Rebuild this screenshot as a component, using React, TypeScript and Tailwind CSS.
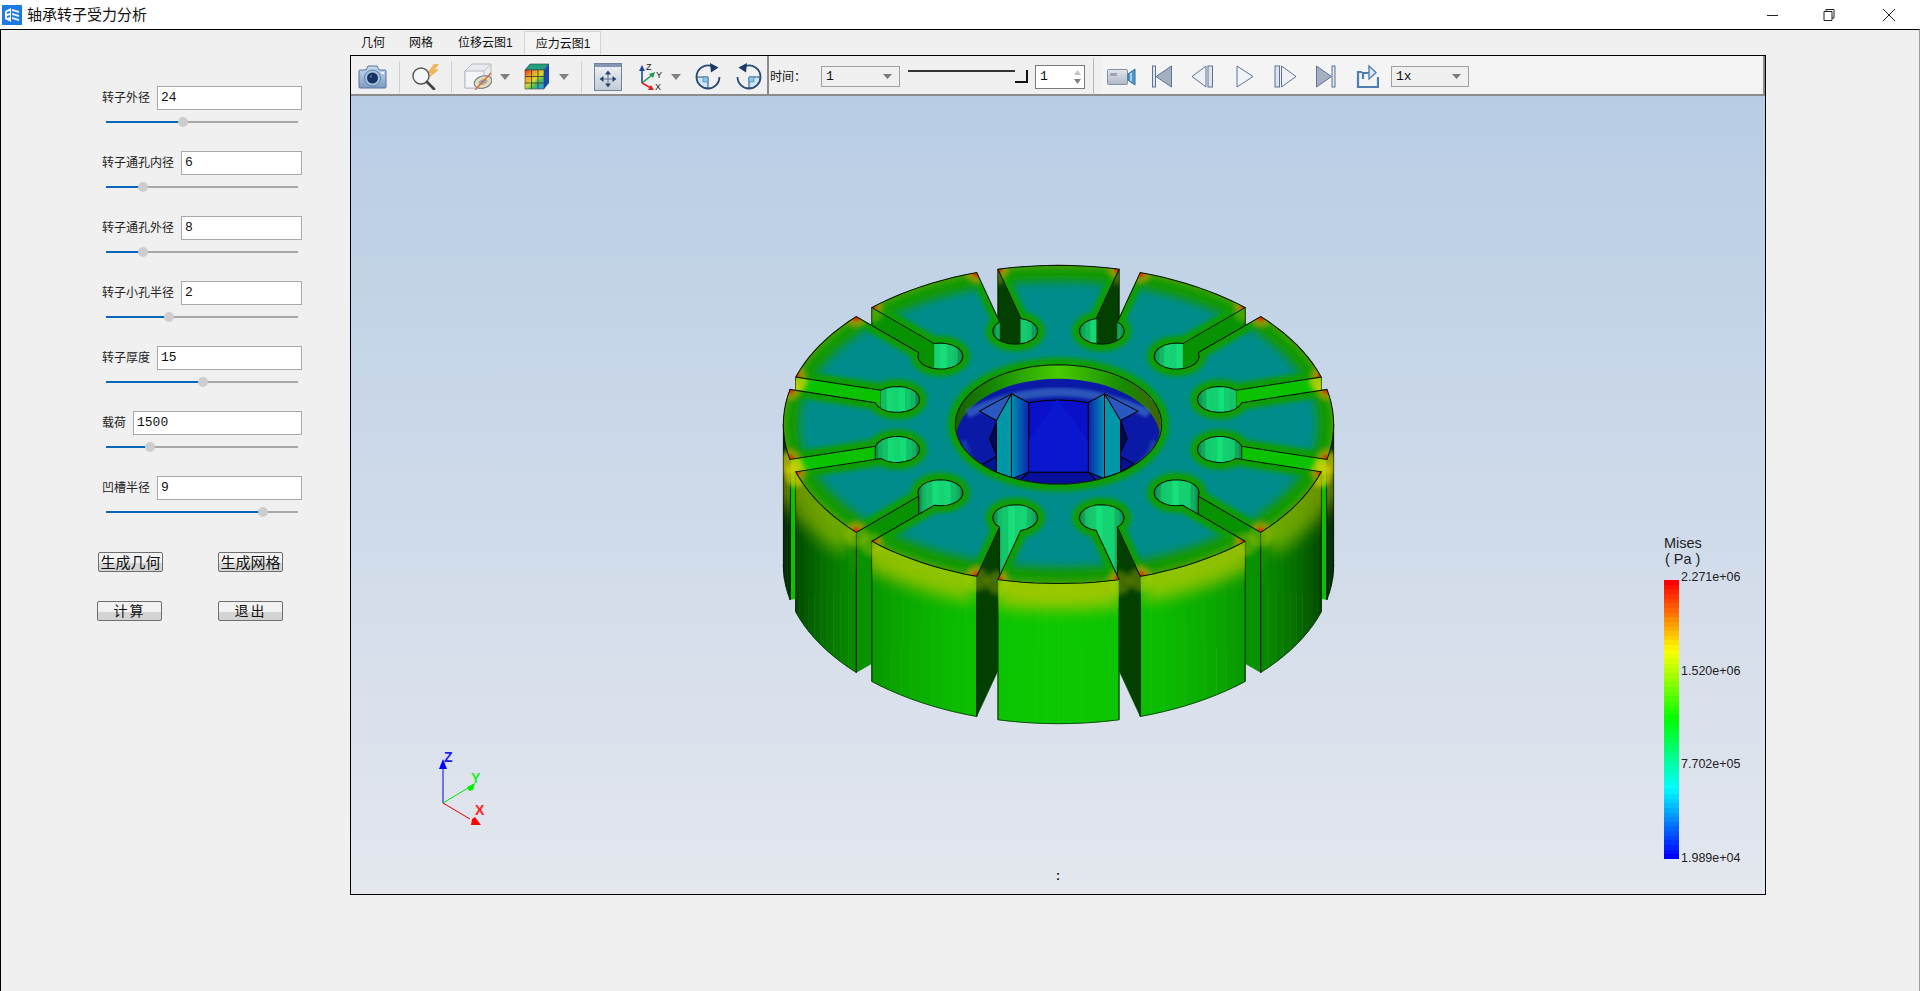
import React from "react";

const CJK = "font-['Liberation_Sans','Noto_Sans_CJK_SC',sans-serif]";

const params = [
  { label: "转子外径", value: "24", pos: 77 },
  { label: "转子通孔内径", value: "6", pos: 37 },
  { label: "转子通孔外径", value: "8", pos: 37 },
  { label: "转子小孔半径", value: "2", pos: 63 },
  { label: "转子厚度", value: "15", pos: 97 },
  { label: "载荷", value: "1500", pos: 44 },
  { label: "凹槽半径", value: "9", pos: 157 },
];

// ---- rotor geometry ----
const CX = 1058;
const CY = 424;
const RX = 275;
const RY = 159;
const H = 140;
const SLOT_W = 0.04;
const HOLE_C = 0.607;
const HOLE_R = 0.082;
const BORE_R = 0.375;

type P = [number, number];
type Run = { kind: "outer" | "slot" | "hole"; pts: P[] };

const sx = (p: P): P => [CX + p[0] * RX, CY + p[1] * RY];
const d2r = (d: number) => (d * Math.PI) / 180;

function buildRuns() {
  const runs: Run[] = [];
  const corners: P[] = [];
  const delta = Math.asin(SLOT_W);
  const phi0 = Math.asin(SLOT_W / HOLE_R);
  const uOut = Math.sqrt(1 - SLOT_W * SLOT_W);
  const uNeck = HOLE_C + HOLE_R * Math.cos(phi0);
  for (let k = 0; k < 12; k++) {
    const t = d2r(15 + 30 * k);
    const d: P = [Math.sin(t), -Math.cos(t)];
    const q: P = [Math.cos(t), Math.sin(t)];
    const at = (u: number, v: number): P => [d[0] * u + q[0] * v, d[1] * u + q[1] * v];
    runs.push({ kind: "slot", pts: [at(uOut, -SLOT_W), at(uNeck, -SLOT_W)] });
    const hole: P[] = [];
    const n = 18;
    for (let i = 0; i <= n; i++) {
      const f = -phi0 - ((2 * Math.PI - 2 * phi0) * i) / n;
      hole.push(at(HOLE_C + HOLE_R * Math.cos(f), HOLE_R * Math.sin(f)));
    }
    runs.push({ kind: "hole", pts: hole });
    runs.push({ kind: "slot", pts: [at(uNeck, SLOT_W), at(uOut, SLOT_W)] });
    const arc: P[] = [];
    const m = 10;
    for (let i = 0; i <= m; i++) {
      const a = t + delta + ((d2r(30) - 2 * delta) * i) / m;
      arc.push([Math.sin(a), -Math.cos(a)]);
    }
    runs.push({ kind: "outer", pts: arc });
    corners.push(at(uOut, -SLOT_W), at(uOut, SLOT_W));
  }
  return { runs, corners };
}

const { runs, corners } = buildRuns();

const toD = (pts: P[]) =>
  pts
    .map((p, i) => {
      const s = sx(p);
      return `${i ? "L" : "M"}${s[0].toFixed(1)} ${s[1].toFixed(1)}`;
    })
    .join(" ");

const outline = runs.flatMap((r) => r.pts);
const bore: P[] = Array.from({ length: 73 }, (_, i) => [
  BORE_R * Math.cos(d2r(i * 5)),
  BORE_R * Math.sin(d2r(i * 5)),
]);
const faceD = `${toD(outline)} Z ${toD(bore)} Z`;
const outerRuns = runs.filter((r) => r.kind === "outer");
const arcsD = outerRuns.map((r) => toD(r.pts)).join(" ");

type Wall = { y: number; d: string; fill: string; kind: string; bottom?: string; ends: string[] };
const walls: Wall[] = [];
runs.forEach((r) => {
  for (let i = 0; i < r.pts.length - 1; i++) {
    const a = r.pts[i];
    const b = r.pts[i + 1];
    const dx = b[0] - a[0];
    const dy = b[1] - a[1];
    const len = Math.hypot(dx, dy);
    const ny = -dx / len;
    if (ny <= 0.02) continue;
    const A = sx(a);
    const B = sx(b);
    let fill: string;
    if (r.kind === "hole") {
      const v = (i % 2 ? 0.9 : 1) * ny;
      fill = `rgb(${Math.round(8 + 14 * v)},${Math.round(95 + 130 * v)},${Math.round(55 + 65 * v)})`;
    } else {
      fill = `rgb(${Math.round(12 * ny)},${Math.round(16 + 184 * ny)},0)`;
    }
    const ends: string[] = [];
    if (r.kind !== "hole" && i === 0) ends.push(`M${A[0]} ${A[1]} V${A[1] + H}`);
    if (r.kind !== "hole" && i === r.pts.length - 2) ends.push(`M${B[0]} ${B[1]} V${B[1] + H}`);
    walls.push({
      y: (A[1] + B[1]) / 2 + (r.kind === "outer" ? 1000 : 0),
      d: `M${A[0]} ${A[1]} L${B[0]} ${B[1]} L${B[0]} ${B[1] + H} L${A[0]} ${A[1] + H} Z`,
      fill,
      kind: r.kind,
      bottom: r.kind === "outer" ? `M${A[0]} ${A[1] + H} L${B[0]} ${B[1] + H}` : undefined,
      ends,
    });
  }
});
walls.sort((a, b) => a.y - b.y);
const outerWallsD = walls.filter((w) => w.kind === "outer").map((w) => w.d).join(" ");
const sideWallsD = walls.filter((w) => w.kind !== "hole").map((w) => w.d).join(" ");

function Rotor() {
  return (
    <svg className="absolute left-0 top-0 h-full w-full" viewBox="351 96 1413 797">
      <defs>
        <filter id="blurL" x="-20%" y="-20%" width="140%" height="140%"><feGaussianBlur stdDeviation="5" /></filter>
        <filter id="blurS" x="-20%" y="-20%" width="140%" height="140%"><feGaussianBlur stdDeviation="2.4" /></filter>
        <filter id="blurXS" x="-100%" y="-100%" width="300%" height="300%"><feGaussianBlur stdDeviation="1.6" /></filter>
        <filter id="blurW" filterUnits="userSpaceOnUse" x="600" y="300" width="920" height="400"><feGaussianBlur stdDeviation="8" /></filter>
        <linearGradient id="bandG" x1="0" y1="0" x2="1" y2="0">
          <stop offset="0" stopColor="#1a5a00" />
          <stop offset="0.2" stopColor="#168a00" />
          <stop offset="0.5" stopColor="#48cc00" />
          <stop offset="0.8" stopColor="#168a00" />
          <stop offset="1" stopColor="#4a5a00" />
        </linearGradient>
        <linearGradient id="colL" x1="0" y1="0" x2="1" y2="0">
          <stop offset="0" stopColor="#0090b0" />
          <stop offset="1" stopColor="#0824b0" />
        </linearGradient>
        <linearGradient id="colR" x1="0" y1="0" x2="1" y2="0">
          <stop offset="0" stopColor="#0824b0" />
          <stop offset="1" stopColor="#0090b0" />
        </linearGradient>
        <clipPath id="faceClip"><path d={faceD} clipRule="evenodd" /></clipPath>
        <clipPath id="boreClip"><ellipse cx="473" cy="252" rx="308" ry="179" /></clipPath>
        <clipPath id="outerClip"><path d={outerWallsD} /></clipPath>
        <clipPath id="sideClip"><path d={sideWallsD} /></clipPath>
      </defs>

      {walls.map((w, i) => (
        <g key={i}>
          <path d={w.d} fill={w.fill} stroke={w.fill} strokeWidth="0.6" />
          {w.bottom && <path d={w.bottom} stroke="#063006" strokeWidth="0.8" fill="none" />}
          {w.ends.map((e, j) => (
            <path key={j} d={e} stroke="#021a02" strokeWidth="1" fill="none" />
          ))}
        </g>
      ))}

      {/* yellow fringe along the top of the outer wall, fainter on the turned-away sectors */}
      <g clipPath="url(#outerClip)">
        {outerRuns.map((r, i) => {
          const mid = r.pts[5];
          if (mid[1] <= 0) return null;
          return <path key={i} d={toD(r.pts)} fill="none" stroke="#b4c800" strokeWidth="52" filter="url(#blurW)" opacity={0.3 + 0.55 * mid[1]} />;
        })}
      </g>
      <g clipPath="url(#sideClip)">
        {corners.map((p, i) => {
          const s = sx(p);
          return <circle key={i} cx={s[0]} cy={s[1] + 3} r="12" fill="#d8d000" filter="url(#blurS)" opacity={Math.abs(p[1]) < 0.45 ? 0.7 : 0.3} />;
        })}
      </g>

      {/* centre bore, traced at 3x around (900,340) */}
      <g transform="translate(900 340) scale(0.33333)">
        <g clipPath="url(#boreClip)">
          <rect x="150" y="60" width="650" height="390" fill="url(#bandG)" />
          <ellipse cx="473" cy="296" rx="306" ry="181" fill="#0a1aa6" />
          <path d="M200 220 Q473 90 745 220" fill="none" stroke="#3a70c4" strokeWidth="26" filter="url(#blurL)" opacity="0.7" />
          <path d="M190 300 Q200 370 250 390 M760 300 Q750 350 710 380" fill="none" stroke="#2c5cc0" strokeWidth="18" filter="url(#blurL)" opacity="0.5" />
          <path d="M268 295 L288 245 V345 Z" fill="#000a58" stroke="#000" strokeWidth="3" />
          <path d="M680 295 L660 240 V335 Z" fill="#000a58" stroke="#000" strokeWidth="3" />
          <path d="M288 348 L245 372 L288 400 Z" fill="#001296" stroke="#000" strokeWidth="3" />
          <path d="M660 348 L700 370 L660 395 Z" fill="#001296" stroke="#000" strokeWidth="3" />
          <path d="M237 212 L333 160 L333 250 L288 240 Z" fill="#2a58c0" stroke="#000" strokeWidth="3" />
          <path d="M712 212 L612 160 L612 250 L660 240 Z" fill="#2a58c0" stroke="#000" strokeWidth="3" />
          <path d="M288 240 L333 160 V412 L288 395 Z" fill="#0098a8" stroke="#000" strokeWidth="3" />
          <path d="M333 160 L385 187 V395 L333 415 Z" fill="url(#colL)" stroke="#000" strokeWidth="3" />
          <path d="M612 160 L563 187 V395 L612 415 Z" fill="url(#colR)" stroke="#000" strokeWidth="3" />
          <path d="M660 240 L612 160 V412 L660 395 Z" fill="#0098a8" stroke="#000" strokeWidth="3" />
          <path d="M385 187 Q473 170 563 187 V395 H385 Z" fill="#0a10c8" stroke="#000" strokeWidth="3" />
          <path d="M470 176 L385 300 V395 H563 V300 Z" fill="#0a1cd4" opacity="0.6" />
          <path d="M385 395 L360 418 L420 440 H520 L585 418 L563 395 Z" fill="#06109a" stroke="#000" strokeWidth="3" />
        </g>
      </g>

      {/* top face with the stress fringes */}
      <g clipPath="url(#faceClip)">
        <rect x="700" y="240" width="720" height="370" fill="#008c8c" />
        <path d={arcsD} fill="none" stroke="#149800" strokeWidth="32" filter="url(#blurL)" />
        <path d={faceD} fill="none" stroke="#0f9e00" strokeWidth="14" filter="url(#blurS)" />
        <path d={arcsD} fill="none" stroke="#5c9a00" strokeWidth="6" filter="url(#blurS)" opacity="0.8" />
        {corners.map((p, i) => {
          const s = sx(p);
          return (
            <g key={i}>
              <circle cx={s[0]} cy={s[1]} r="11" fill="#a09a00" filter="url(#blurS)" opacity="0.85" />
              <circle cx={s[0]} cy={s[1]} r="4.5" fill="#e03000" filter="url(#blurXS)" />
            </g>
          );
        })}
      </g>
      <path d={faceD} fill="none" stroke="#031603" strokeWidth="1" />
    </svg>
  );
}

function Legend() {
  const bands = Array.from({ length: 60 }, (_, i) => {
    const f = i / 59;
    const hue = f < 0.5 ? f * 2 * 120 : 120 + (f - 0.5) * 2 * 120;
    return `hsl(${hue.toFixed(0)},100%,50%)`;
  });
  const labels = [
    { t: "2.271e+06", cls: "top-[474px]" },
    { t: "1.520e+06", cls: "top-[568px]" },
    { t: "7.702e+05", cls: "top-[661px]" },
    { t: "1.989e+04", cls: "top-[755px]" },
  ];
  return (
    <>
      <div className="absolute left-[1313px] top-[439px] text-[14.5px] leading-[16px] text-[#222] font-['Liberation_Sans',sans-serif]">
        Mises
        <br />
        <span className="ml-[1px]">( Pa )</span>
      </div>
      <svg className="absolute left-[1313px] top-[484px]" width="15" height="279" viewBox="0 0 15 279" shapeRendering="crispEdges">
        {bands.map((c, i) => (
          <rect key={i} x="0" y={i * 4.65} width="15" height="5" fill={c} />
        ))}
      </svg>
      {labels.map((l) => (
        <div key={l.t} className={`absolute left-[1330px] text-[12.5px] leading-[14px] text-[#222] font-['Liberation_Sans',sans-serif] ${l.cls}`}>
          {l.t}
        </div>
      ))}
    </>
  );
}

function Triad() {
  return (
    <svg className="absolute left-[59px] top-[644px]" width="100" height="100" viewBox="0 0 100 100">
      <path d="M33 63 L33 28" stroke="#0000ff" strokeWidth="1" />
      <path d="M33 19 L37 29 L29 29 Z" fill="#0000ff" />
      <path d="M33 63 L58 48" stroke="#00e000" strokeWidth="1" />
      <path d="M65 43 L63 50 L59 51 L57 47 Z" fill="#00ee00" />
      <path d="M33 63 L60 79" stroke="#e00000" strokeWidth="1" />
      <path d="M71 85 L61 85 L62 79 L65 77 Z" fill="#ff0000" />
      <text x="34" y="22" fontSize="14" fontWeight="700" fill="#1a1aff" fontFamily="Liberation Sans, sans-serif">Z</text>
      <text x="61" y="43" fontSize="14" fontWeight="700" fill="#22ee22" fontFamily="Liberation Sans, sans-serif">Y</text>
      <text x="65" y="75" fontSize="14" fontWeight="700" fill="#ff2020" fontFamily="Liberation Sans, sans-serif">X</text>
    </svg>
  );
}

// ---- toolbar icons ----
function CameraIcon() {
  return (
    <svg width="29" height="26" viewBox="0 0 29 26">
      <defs>
        <linearGradient id="camG" x1="0" y1="0" x2="0" y2="1">
          <stop offset="0" stopColor="#c9dcee" />
          <stop offset="1" stopColor="#7d9cc2" />
        </linearGradient>
      </defs>
      <path d="M2 6 H8 L10 2 H19 L21 6 H27 Q28 6 28 7 V23 Q28 24 27 24 H2 Q1 24 1 23 V7 Q1 6 2 6 Z" fill="url(#camG)" stroke="#56749c" />
      <circle cx="14.5" cy="14" r="8" fill="#a9c4de" stroke="#5d7da6" />
      <circle cx="14.5" cy="14" r="5.5" fill="#173264" />
      <circle cx="13" cy="12.5" r="1.2" fill="#4c6ea4" />
      <rect x="23" y="8" width="3" height="2" fill="#eef4fa" />
    </svg>
  );
}
function MagnifierIcon() {
  return (
    <svg width="29" height="27" viewBox="0 0 29 27">
      <path d="M23 1 L16 10 H20 L18 15 L28 6.5 H24 L28 1 Z" fill="#f2b45a" />
      <circle cx="10" cy="13" r="8" fill="#f6f7f9" stroke="#555" strokeWidth="1.4" />
      <path d="M16 19 L23 26" stroke="#444" strokeWidth="2.8" strokeLinecap="round" />
    </svg>
  );
}
function ClipCubeIcon() {
  return (
    <svg width="28" height="27" viewBox="0 0 28 27">
      <path d="M1 8 L8 1 H27 V17 L20 25 H1 Z" fill="#e9ebee" stroke="#b4bac2" />
      <path d="M20 8 L27 1" fill="none" stroke="#bcc2ca" />
      <path d="M1 8 H20 V25 H1 Z" fill="#f5f6f7" stroke="#b4bac2" />
      <ellipse cx="19" cy="19" rx="9" ry="6" fill="#e8dcae" stroke="#66788f" transform="rotate(-18 19 19)" />
      <ellipse cx="19" cy="19" rx="4.5" ry="2.6" fill="#9aa8ba" transform="rotate(-18 19 19)" />
      <path d="M11 27 L27 10" stroke="#d8603c" strokeWidth="1.2" />
    </svg>
  );
}
function FringeCubeIcon() {
  return (
    <svg width="26" height="27" viewBox="0 0 26 27">
      <defs>
        <linearGradient id="frG" x1="0" y1="0" x2="0.8" y2="1">
          <stop offset="0" stopColor="#e82818" />
          <stop offset="0.3" stopColor="#f0a020" />
          <stop offset="0.55" stopColor="#d8d830" />
          <stop offset="0.75" stopColor="#40c060" />
          <stop offset="1" stopColor="#28a0e0" />
        </linearGradient>
      </defs>
      <path d="M6 1 H25 L20 7 H1 Z" fill="#20a080" stroke="#333" strokeWidth="0.6" />
      <path d="M20 7 L25 1 V20 L20 26 Z" fill="#1848b0" />
      <rect x="1" y="7" width="19" height="19" fill="url(#frG)" />
      <path d="M7.5 7 V26 M14 7 V26 M1 13.5 H20 M1 20 H20" stroke="#333" strokeWidth="0.8" />
      <path d="M1 7 H20 V26 H1 Z" fill="none" stroke="#444" strokeWidth="0.6" />
    </svg>
  );
}
function FitIcon() {
  return (
    <svg width="28" height="28" viewBox="0 0 28 28">
      <defs>
        <linearGradient id="fitG" x1="0" y1="0" x2="0" y2="1">
          <stop offset="0" stopColor="#f0f2f5" />
          <stop offset="1" stopColor="#c4ccd8" />
        </linearGradient>
      </defs>
      <rect x="0.5" y="0.5" width="27" height="27" fill="url(#fitG)" stroke="#6f829e" />
      <rect x="1" y="1" width="26" height="3" fill="#8496b2" />
      <path d="M14 11 V21 M9 16 H19" stroke="#5a7090" strokeWidth="1" />
      <path d="M14 7.5 L17 11.5 H11 Z M14 24.5 L17 20.5 H11 Z M5.5 16 L9.5 13 V19 Z M22.5 16 L18.5 13 V19 Z" fill="#26456f" />
    </svg>
  );
}
function AxesIcon() {
  return (
    <svg width="26" height="28" viewBox="0 0 26 28">
      <path d="M4 20 V6" stroke="#1a4aa8" strokeWidth="1.6" />
      <path d="M4 2 L7 8 H1 Z" fill="#1a4aa8" />
      <path d="M4 20 L14 12" stroke="#1a9a50" strokeWidth="1.6" />
      <path d="M17 9 L15 15 L11 11 Z" fill="#1a9a50" />
      <path d="M4 20 L13 25" stroke="#e02020" strokeWidth="1.6" />
      <path d="M16 27 L10 27 L13 22 Z" fill="#e02020" />
      <text x="8" y="7" fontSize="9" fill="#222" fontFamily="Liberation Sans, sans-serif">Z</text>
      <text x="18" y="15" fontSize="9" fill="#222" fontFamily="Liberation Sans, sans-serif">Y</text>
      <text x="17" y="27" fontSize="9" fill="#222" fontFamily="Liberation Sans, sans-serif">X</text>
    </svg>
  );
}
function RotateIcon({ flip }: { flip?: boolean }) {
  return (
    <svg width="28" height="27" viewBox="0 0 28 27" className={flip ? "-scale-x-100" : ""}>
      <path d="M14 14 H2.5 A11.5 11.5 0 0 0 14 25.5 Z" fill="#cfe6f8" stroke="#2a4a78" strokeWidth="1" />
      <path d="M9 14 H14 V19 H9 Z" fill="#8cc4ec" stroke="#3a7ab0" strokeWidth="0.6" />
      <path d="M18 3.2 A11.5 11.5 0 0 0 2.5 14 A11.5 11.5 0 0 0 25.5 14" fill="none" stroke="#2a4a78" strokeWidth="1.8" />
      <path d="M16 0 L24.5 4.5 L17 9.5 Z" fill="#1c3a68" />
    </svg>
  );
}
function CamcorderIcon() {
  return (
    <svg width="29" height="20" viewBox="0 0 29 20">
      <defs>
        <linearGradient id="ccG" x1="0" y1="0" x2="0" y2="1">
          <stop offset="0" stopColor="#e4e8ee" />
          <stop offset="1" stopColor="#aeb8c6" />
        </linearGradient>
      </defs>
      <rect x="0.5" y="2.5" width="20" height="15" rx="1.5" fill="url(#ccG)" stroke="#8090a6" />
      <rect x="3" y="6" width="7" height="3" fill="#9aa4b2" />
      <path d="M21 7 L28 2 V18 L21 13 Z" fill="#4f9ad0" stroke="#2f6a9c" />
      <path d="M24 6 V14" stroke="#cfe6f6" strokeWidth="1.4" />
    </svg>
  );
}

function PlayIcon({ kind, w }: { kind: string; w: number }) {
  return (
    <svg width={w} height="24" viewBox={`0 0 ${w} 24`}>
      {kind === "first" && (
        <>
          <rect x="0.5" y="1" width="3" height="21" fill="#dfe4ea" stroke="#5d7496" />
          <path d="M19.5 1 V22 L4 11.5 Z" fill="#a4b0c0" stroke="#5d7496" />
        </>
      )}
      {kind === "prev" && (
        <>
          <path d="M15 1 V22 L1 11.5 Z" fill="#edf0f4" stroke="#5d7496" />
          <rect x="17" y="1" width="4.5" height="21" fill="#dfe4ea" stroke="#5d7496" />
        </>
      )}
      {kind === "play" && <path d="M1 1 V22 L17 11.5 Z" fill="#f0f3f7" stroke="#5d7496" />}
      {kind === "next" && (
        <>
          <rect x="1" y="1" width="4.5" height="21" fill="#dfe4ea" stroke="#5d7496" />
          <path d="M7.5 1 V22 L22 11.5 Z" fill="#edf0f4" stroke="#5d7496" />
        </>
      )}
      {kind === "last" && (
        <>
          <path d="M0.5 1 V22 L15.5 11.5 Z" fill="#a4b0c0" stroke="#5d7496" />
          <rect x="16" y="1" width="3" height="21" fill="#dfe4ea" stroke="#5d7496" />
        </>
      )}
    </svg>
  );
}
function ExportIcon() {
  return (
    <svg width="23" height="25" viewBox="0 0 23 25">
      <path d="M6 8 H2 V23 H22 V13" fill="none" stroke="#4f7fb0" strokeWidth="2.2" />
      <path d="M7 15 V9 H13" fill="none" stroke="#4f7fb0" strokeWidth="2.2" />
      <path d="M13 2 L20 8.5 L13 15 Z" fill="#dfe8f2" stroke="#4f7fb0" strokeWidth="1.4" />
    </svg>
  );
}
function DropArrow() {
  return (
    <svg width="10" height="6" viewBox="0 0 10 6">
      <path d="M0 0 H10 L5 6 Z" fill="#808080" />
    </svg>
  );
}

function Combo({ text, w }: { text: string; w: string }) {
  return (
    <div className={`flex h-[21px] items-center justify-between border border-[#a0a0a0] bg-[#f0f0f0] pl-[4px] pr-[7px] text-[13px] text-[#111] ${w}`}>
      <span className="font-['Liberation_Mono',monospace]">{text}</span>
      <svg width="9" height="5" viewBox="0 0 9 5"><path d="M0 0 H9 L4.5 5 Z" fill="#7a7a7a" /></svg>
    </div>
  );
}
function Sep() {
  return <div className="h-[32px] w-px bg-[#d0d0d0]" />;
}

function Toolbar() {
  return (
    <div className={`flex h-[40px] shrink-0 border-b-2 border-r-2 border-[#8c8c8c] bg-[#f0f0f0] ${CJK}`}>
      <div className="flex items-center pt-[3px]">
        <div className="ml-[7px]"><CameraIcon /></div>
        <div className="ml-[12px]"><Sep /></div>
        <div className="ml-[11px]"><MagnifierIcon /></div>
        <div className="ml-[11px]"><Sep /></div>
        <div className="ml-[12px]"><ClipCubeIcon /></div>
        <div className="ml-[8px]"><DropArrow /></div>
        <div className="ml-[14px]"><FringeCubeIcon /></div>
        <div className="ml-[9px]"><DropArrow /></div>
        <div className="ml-[12px]"><Sep /></div>
        <div className="ml-[12px]"><FitIcon /></div>
        <div className="ml-[16px]"><AxesIcon /></div>
        <div className="ml-[7px]"><DropArrow /></div>
        <div className="ml-[13px]"><RotateIcon /></div>
        <div className="ml-[13px]"><RotateIcon flip /></div>
      </div>
      <div className="ml-[4px] h-full w-[2px] bg-[#8c8c8c]" />
      <div className="flex items-center pt-[3px]">
        <div className="ml-px w-[36px] whitespace-nowrap text-[12px] leading-none text-[#111]">时间：</div>
        <div className="ml-[15px]"><Combo text="1" w="w-[79px]" /></div>
        <div className="relative ml-[8px] h-[14px] w-[120px]">
          <div className="h-[2px] w-full bg-[#333]" />
          <div className="absolute right-0 top-0 h-[13px] w-[13px] border-b-2 border-r-2 border-[#111] bg-[#f0f0f0]" />
        </div>
        <div className="ml-[7px] flex h-[24px] w-[50px] items-center justify-between border border-[#7a7a7a] bg-white pl-[4px] pr-[3px] font-['Liberation_Mono',monospace] text-[13px] text-[#111]">
          1
          <svg width="7" height="14" viewBox="0 0 7 14">
            <path d="M0 5 L3.5 0 L7 5 Z" fill="#c4c4c4" />
            <path d="M0 9 L3.5 14 L7 9 Z" fill="#808080" />
          </svg>
        </div>
        <div className="ml-[8px]"><div className="h-[37px] w-px bg-[#b8b8b8]" /></div>
      </div>
      <div className="ml-[8px] flex flex-1 items-center bg-[#f4f4f4] pt-[3px]">
        <div className="ml-[5px]"><CamcorderIcon /></div>
        <div className="ml-[16px]"><PlayIcon kind="first" w={20} /></div>
        <div className="ml-[19px]"><PlayIcon kind="prev" w={23} /></div>
        <div className="ml-[22px]"><PlayIcon kind="play" w={18} /></div>
        <div className="ml-[20px]"><PlayIcon kind="next" w={23} /></div>
        <div className="ml-[19px]"><PlayIcon kind="last" w={20} /></div>
        <div className="ml-[20px]"><ExportIcon /></div>
        <div className="ml-[12px]"><Combo text="1x" w="w-[78px]" /></div>
      </div>
    </div>
  );
}

function ParamRow({ label, value, pos }: { label: string; value: string; pos: number }) {
  return (
    <div className="h-[65px]">
      <div className="flex items-center gap-[7px]">
        <span className="text-[12px] leading-none text-[#222]">{label}</span>
        <div className="flex h-[24px] flex-1 items-center border border-[#a8a8a8] bg-white pl-[3px] font-['Liberation_Mono',monospace] text-[13px] text-[#111]">
          {value}
        </div>
      </div>
      <div className="relative ml-[4px] mt-[11px] h-[2px] w-[192px] bg-[#a8a8a8]">
        <div className="h-full bg-[#0a66b8]" style={{ width: pos }} />
        <div className="absolute top-[-4px] h-[10px] w-[10px] rounded-full bg-[#cdcdcd]" style={{ left: pos - 5 }} />
      </div>
    </div>
  );
}

function Btn({ children, className }: { children: React.ReactNode; className?: string }) {
  return (
    <div className={`flex h-[20px] w-[65px] items-center justify-center rounded-[2px] border border-[#6e6e6e] bg-[linear-gradient(#f2f2f2_55%,#d4d4d4_55%)] text-[15px] leading-none text-[#111] ${className ?? ""}`}>
      {children}
    </div>
  );
}

export default function App() {
  return (
    <div className={`flex h-[991px] w-[1920px] flex-col overflow-hidden bg-white ${CJK}`}>
      <div className="flex h-[29px] shrink-0 items-center">
        <svg className="ml-[2px]" width="20" height="20" viewBox="0 0 20 20">
          <rect width="20" height="20" fill="#1c7ae6" />
          <path d="M3 6 L9 3 V17 L3 14 Z" fill="#fff" />
          <path d="M10 4 L17 6 V8 L10 6 Z M10 8 L17 10 V12 L10 10 Z M10 12 L17 14 V16 L10 14 Z" fill="#e8f2fe" />
          <path d="M5 7 L8 6 V8 L5 9 Z M5 11 L8 10 V12 L5 13 Z" fill="#1c7ae6" />
        </svg>
        <span className="ml-[5px] text-[15px] leading-none text-[#111]">轴承转子受力分析</span>
        <svg className="ml-auto mr-[25px]" width="130" height="16" viewBox="0 0 130 16" fill="none" stroke="#222" strokeWidth="1">
          <path d="M2 8.5 H13" />
          <path d="M59 4.5 H67 V13.5 H59 Z M61 4.5 V2.5 H69 V11 H67" />
          <path d="M118 2 L130 14 M130 2 L118 14" />
        </svg>
      </div>
      <div className="flex flex-1 border-l border-r border-t border-l-black border-r-[#a0a0a0] border-t-black bg-[#f0f0f0]">
        <div className="flex w-[349px] shrink-0 flex-col pl-[101px] pr-[48px] pt-[56px]">
          {params.map((p) => (
            <ParamRow key={p.label} {...p} />
          ))}
          <div className="-ml-[4px] mt-[11px] flex gap-[55px]">
            <Btn>生成几何</Btn>
            <Btn>生成网格</Btn>
          </div>
          <div className="-ml-[5px] mt-[29px] flex gap-[56px]">
            <Btn><span className="text-[14px] tracking-[2px]">计算</span></Btn>
            <Btn><span className="text-[14px] tracking-[2px]">退出</span></Btn>
          </div>
        </div>
        <div className="flex w-[1416px] flex-col pt-px">
          <div className="flex h-[24px] shrink-0 items-center pl-[11px] text-[12px] leading-none text-[#111]">
            <span>几何</span>
            <span className="ml-[24px]">网格</span>
            <span className="ml-[25px]">位移云图1</span>
            <span className="ml-[11px] flex h-full w-[77px] items-center border border-b-0 border-[#d4d4d4] bg-[#f3f3f3] pl-[11px]">应力云图1</span>
          </div>
          <div className="flex h-[840px] flex-col border border-black">
            <Toolbar />
            <div className="relative flex-1 overflow-hidden bg-[linear-gradient(#b8cde5,#e4e7ee)]">
              <Rotor />
              <Triad />
              <Legend />
              <div className="absolute left-[705px] top-[774px] font-['Liberation_Sans',sans-serif] text-[12px] font-bold leading-none text-[#111]">:</div>
            </div>
          </div>
        </div>
      </div>
    </div>
  );
}
